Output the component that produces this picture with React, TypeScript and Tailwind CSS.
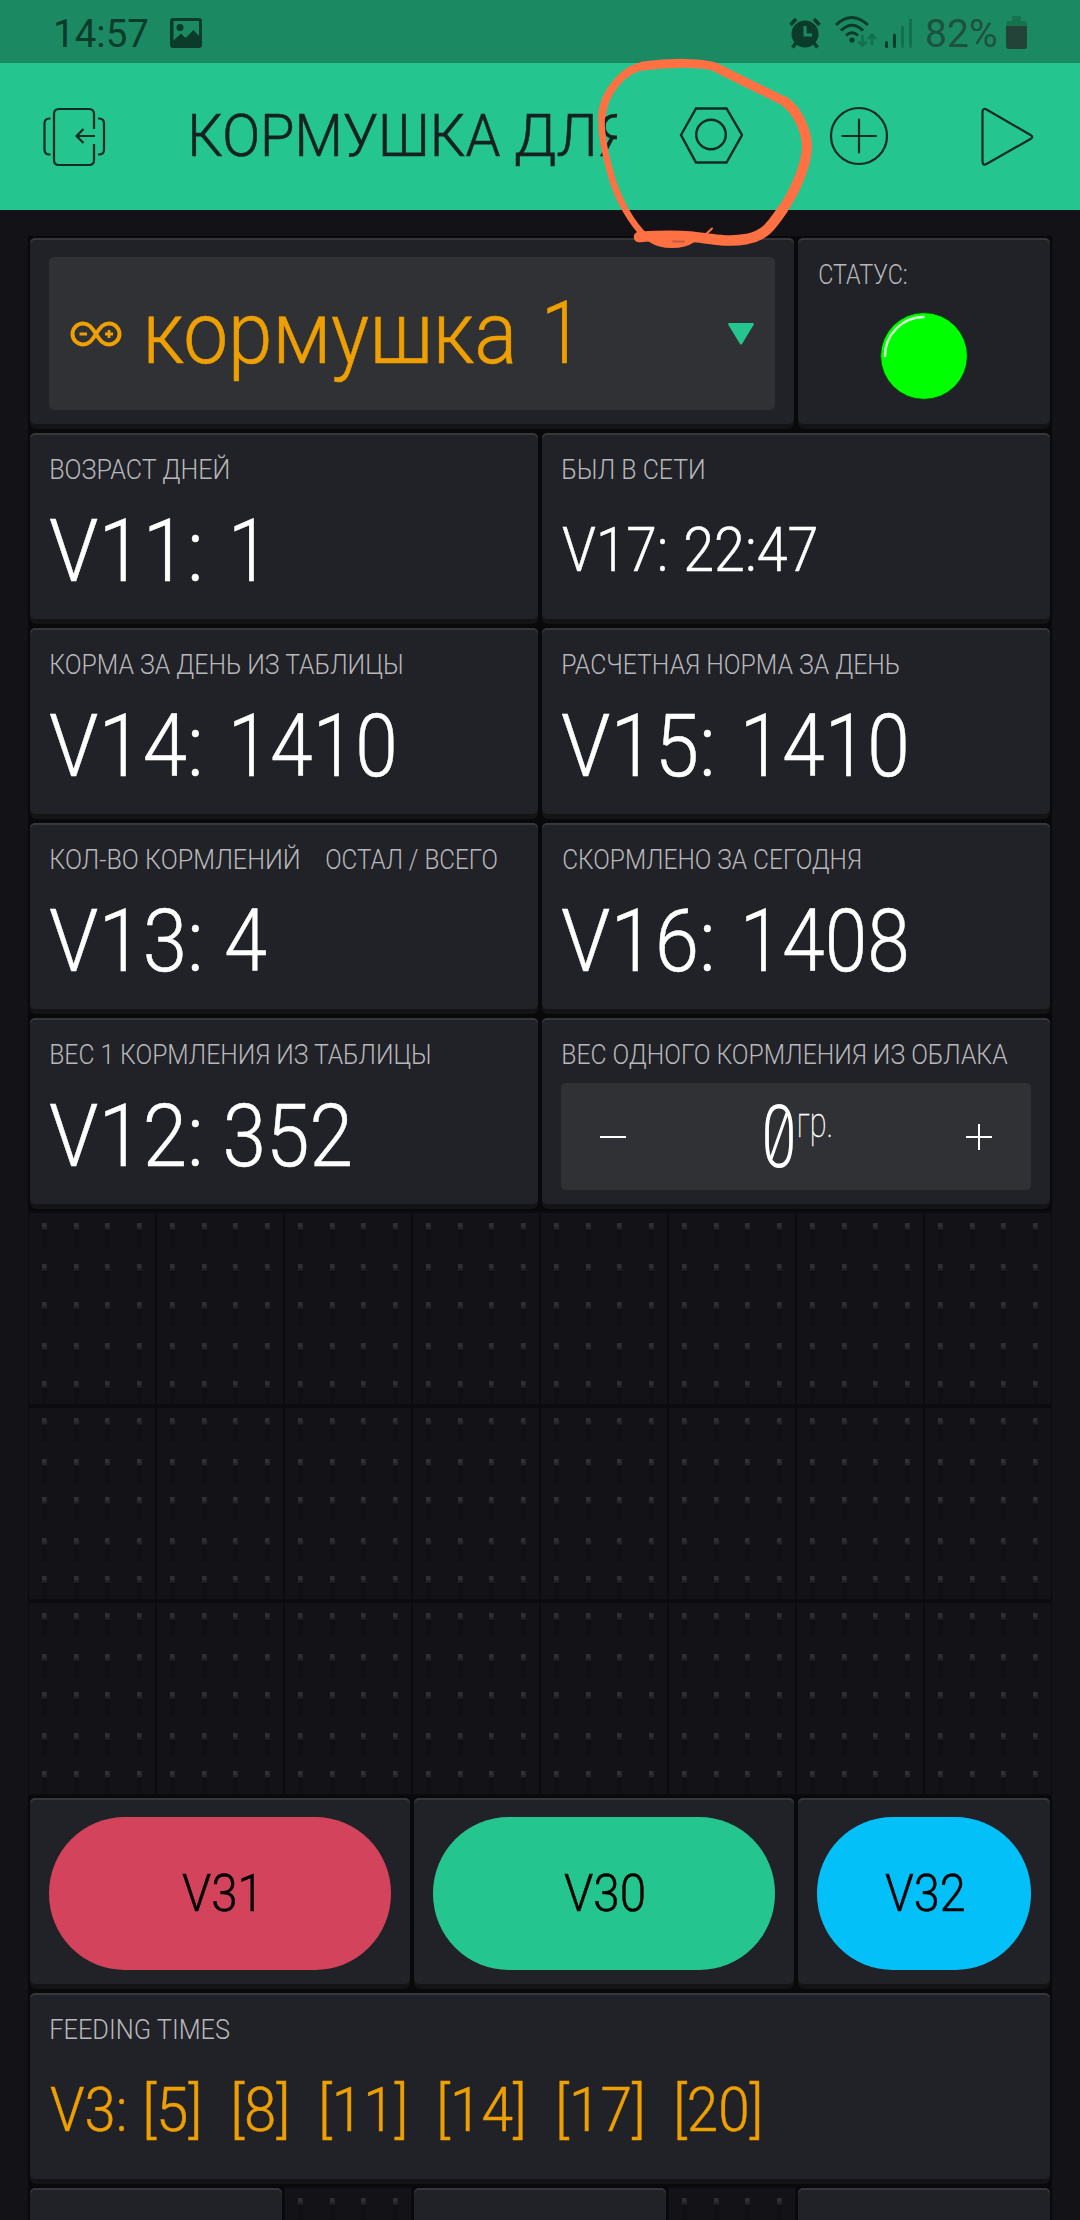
import { useLayoutEffect, useRef, type ReactNode } from "react";

/** One line of text whose inked width is fitted to `width` pixels. */
function Fit({ text, width, className = "" }: { text: string; width: number; className?: string }) {
  const box = useRef<HTMLSpanElement>(null);
  const ink = useRef<HTMLSpanElement>(null);
  useLayoutEffect(() => {
    const el = ink.current;
    if (!el || !box.current) return;
    const cs = getComputedStyle(el);
    const ctx = document.createElement("canvas").getContext("2d");
    if (!ctx) return;
    ctx.font = `${cs.fontWeight} ${cs.fontSize} ${cs.fontFamily}`;
    const m = ctx.measureText(text);
    const scale = width / (m.actualBoundingBoxLeft + m.actualBoundingBoxRight);
    box.current.style.width = `${width}px`;
    el.style.transform = `translateX(${m.actualBoundingBoxLeft * scale}px) scaleX(${scale})`;
  }, [text, width]);
  return (
    <span ref={box} className={`block shrink-0 whitespace-pre ${className}`}>
      <span ref={ink} className="inline-block origin-left">
        {text}
      </span>
    </span>
  );
}

const LABEL = "text-[28px] leading-7 text-[#b8b8bc]";

function Card({ span, children, className = "" }: { span: string; children?: ReactNode; className?: string }) {
  return (
    <div className={`bg-[#09090b] px-0.5 pt-0.5 pb-0.5 ${span}`}>
      <div className="h-[191px] rounded-[6px] bg-[#141416] pb-[5px]">
        <div className={`h-[186px] rounded-[5px] bg-[#212227] shadow-[inset_0_2px_0_#37373b] ${className}`}>{children}</div>
      </div>
    </div>
  );
}

type Run = [string, number];

/** Labelled display; `gap` separates the pin name from its value. */
function ValueCard({ labels, pin, value, gap, small }: { labels: Run[]; pin: Run; value: Run; gap: string; small?: boolean }) {
  const size = small
    ? "text-[60.5px] leading-none [-webkit-text-stroke:0.5px]"
    : "text-[87px] leading-none [-webkit-text-stroke:0.5px]";
  return (
    <Card span="col-span-4" className="flex flex-col pt-[23px] pl-5">
      <div className="flex h-7 gap-[27px] pl-px">
        {labels.map(([t, w]) => (
          <Fit key={t} text={t} width={w} className={LABEL} />
        ))}
      </div>
      <div className={`flex flex-1 items-center text-white ${gap}`}>
        <Fit text={pin[0]} width={pin[1]} className={size} />
        <Fit text={value[0]} width={value[1]} className={size} />
      </div>
    </Card>
  );
}

const DOT_X = [14, 46, 77, 109];
const DOT_Y = [12, 53, 91, 132, 170];

function EmptyCell() {
  return (
    <div className="border-x border-y-2 border-[#0c0c10] bg-[#131217]">
      <svg width="126" height="191" viewBox="1 2 126 191">
        {DOT_Y.map((y) =>
          DOT_X.map((x) => (
            <g key={`${x}-${y}`}>
              <rect x={x} y={y + 6} width="5" height="18" fill="#101013" />
              <rect x={x} y={y} width="5" height="6.5" fill="#242427" />
              <rect x={x} y={y} width="4" height="4" fill="#303033" />
            </g>
          )),
        )}
      </svg>
    </div>
  );
}

function PillCard({ span, text, width, color, nudge = "" }: { span: string; text: string; width: number; color: string; nudge?: string }) {
  return (
    <Card span={span} className="px-[19px] pt-[19px]">
      <button className={`flex h-[153px] w-full items-center justify-center rounded-[76px] text-black ${color}`}>
        <Fit text={text} width={width} className={`text-[52px] leading-[152px] [-webkit-text-stroke:0.5px] ${nudge}`} />
      </button>
    </Card>
  );
}

function StatusBar() {
  return (
    <div className="flex h-[63px] bg-[#1b8a63] text-[#0b3b2a]">
      <Fit text="14:57" width={92} className="ml-14 pt-[13px] text-[39px] leading-[43px] font-normal" />
      <svg className="mt-[18px] ml-[22px]" width="32" height="30" viewBox="0 0 32 30">
        <path fillRule="evenodd" fill="currentColor" d="M3 0h26q3 0 3 3v24q0 3-3 3H3q-3 0-3-3V3q0-3 3-3ZM3.500 3v19.500l7.500-7 4.500 4.500 8-8 5.500 6V3Z" />
        <circle cx="10" cy="9.500" r="3.500" fill="currentColor" />
      </svg>
      <svg className="mt-[17px] ml-auto" width="32" height="32" viewBox="0 0 32 32">
        <circle cx="16" cy="17" r="13.500" fill="currentColor" />
        <path d="M1.500 8 7 2M30.500 8 25 2M7 26l-3.500 4.500M25 26l3.500 4.500" stroke="currentColor" strokeWidth="3.500" />
        <path d="M16 9v9h7" fill="none" stroke="#1b8a63" strokeWidth="3" />
      </svg>
      <svg className="mt-[15px] ml-[13px]" width="44" height="34" viewBox="0 0 44 34" fill="none" stroke="currentColor">
        <path d="M2 10q15.500-15 32 0M7 15.500q11-10.500 22 0M12 20.500q6-5.500 12 0" strokeWidth="3" />
        <circle cx="18" cy="25" r="2.600" fill="currentColor" stroke="none" />
        <path d="M28.500 20v11M24.500 26.500l4 4 4-4M38 30V20M34 24l4-4 4 4" stroke="#13704f" strokeWidth="2.600" />
      </svg>
      <svg className="mt-[17px] ml-[6px]" width="30" height="32" viewBox="0 0 30 32" strokeWidth="3" strokeLinecap="round">
        <path d="M2.500 25.500v4M10.500 18v11.500" stroke="currentColor" />
        <path d="M18.500 10v19.500M26.500 3v26.500" stroke="#13704f" />
      </svg>
      <Fit text="82%" width={69} className="ml-[13px] pt-[13px] text-[39px] leading-[43px] font-normal text-[#1e5140]" />
      <svg className="mt-4 mr-[53px] ml-[10px]" width="21" height="33" viewBox="0 0 21 33">
        <path d="M6 0h9v5h3q3 0 3 3v3H0V8q0-3 3-3h3Z" fill="#157350" />
        <path d="M0 10h21v20q0 3-3 3H3q-3 0-3-3Z" fill="#234338" />
      </svg>
    </div>
  );
}

function Header() {
  return (
    <div className="flex h-[147px] items-start bg-[#25c58f] text-[#0f2b24]">
      <svg className="mt-11 ml-[42px]" width="64" height="60" viewBox="42 107 64 60" fill="none" stroke="currentColor" strokeWidth="2.200">
        <path d="M94 129v-15q0-5-5-5H59q-5 0-5 5v46q0 5 5 5h30q5 0 5-5v-16M95 136H76.500M83.500 129l-7 7 7 7" />
        <path d="M50.500 118.500h-1q-5 0-5 5v26q0 5 5 5h1M98 118.500h1q5 0 5 5v26q0 5-5 5h-1" />
      </svg>
      <div className="ml-[86px] flex h-[147px] w-[425px] gap-4 overflow-hidden text-[60px] leading-[145px] text-[#16221f] [-webkit-text-stroke:0.6px]">
        <Fit text="КОРМУШКА" width={308} />
        <Fit text="ДЛЯ" width={113} />
      </div>
      <svg className="mt-[43px] ml-[62px]" width="64" height="60" viewBox="679 106 64 60" fill="none" stroke="currentColor" strokeWidth="2.400">
        <path d="M681 135 696 108.500h30.500L742 135l-15.500 27.500H696Z" />
        <circle cx="711" cy="134.500" r="14.800" />
      </svg>
      <svg className="mt-[43px] ml-[86px]" width="60" height="60" viewBox="829 106 60 60" fill="none" stroke="currentColor" strokeWidth="2.200">
        <circle cx="859" cy="136" r="28" />
        <path d="M842.500 136h33.500M859 119.500v33" strokeLinecap="round" />
      </svg>
      <svg className="mt-[43px] ml-[91px]" width="56" height="62" viewBox="980 106 56 62" fill="none" stroke="currentColor" strokeWidth="2.200">
        <path d="M982.500 112v49q0 5 4 3l44-25q3.500-2 0-4l-44-25.500q-4-2-4 2.500Z" />
      </svg>
    </div>
  );
}

/** Freehand marker ring around the settings nut. */
function MarkerRing() {
  return (
    <svg className="pointer-events-none absolute top-[50px] left-[590px]" width="235" height="210" viewBox="590 50 235 210" fill="none" stroke="#ff7043" strokeLinecap="round" strokeLinejoin="round">
      <path d="M646 237C632 224 618 200 611 175C604 150 600 130 602 115" strokeWidth="6.500" />
      <path d="M602 115C604 92 624 69 643 66" strokeWidth="8" />
      <path d="M643 66C665 63 706 61 719 69L747 83L784 101" strokeWidth="9" />
      <path d="M784 101C800 112 807 134 807 148C806 170 790 199 783 209" strokeWidth="10" />
      <path d="M783 209C770 228 765 235 747 239C726 243 708 238 690 236.500C670 235 655 236 639 237" strokeWidth="10.500" />
      <path d="M650 240C662 248 682 248 694 240L671 238Z" fill="#ff7043" strokeWidth="4" />
      <path d="M712 228.500 704 236" strokeWidth="2" />
      <path d="M673 241.500h11" stroke="#c75a38" strokeWidth="2" />
    </svg>
  );
}

const TIMES: Run[] = [
  ["[5]", 52],
  ["[8]", 52],
  ["[11]", 82],
  ["[14]", 82.500],
  ["[17]", 82.500],
  ["[20]", 82],
];

export default function App() {
  return (
    <div className="relative h-[2220px] w-[1080px] overflow-hidden bg-[#131217] font-['Roboto',sans-serif] font-light">
      <StatusBar />
      <Header />
      <div className="mx-7 mt-[26px] grid auto-rows-[195px] grid-cols-8">
        <Card span="col-span-6" className="px-[19px] pt-[19px]">
          <div className="flex h-[153px] items-center rounded-[5px] bg-[#303134] px-[21px] text-[#ee9f02]">
            <svg className="shrink-0" width="52" height="26" viewBox="0 0 52 26" fill="none" stroke="currentColor" strokeWidth="4">
              <path d="M26 13C21 5 18 2.500 13 2.500a10.500 10.500 0 0 0 0 21C18 23.500 21 21 26 13S34 2.500 39 2.500a10.500 10.500 0 0 1 0 21C34 23.500 31 21 26 13Z" />
              <path d="M9.500 13h7.500M35 13h8M39 9v8" strokeWidth="2.800" />
            </svg>
            <div className="ml-[26px] flex gap-[34px] text-[87px] leading-[151px] [-webkit-text-stroke:0.6px]">
              <Fit text="кормушка" width={365} />
              <Fit text="1" width={20} />
            </div>
            <svg className="ml-auto" width="26" height="22" viewBox="0 0 26 22">
              <path d="M1 0h24q1.500.500.500 2L14 21q-1 1-2 0L.500 2Q-.500.500 1 0Z" fill="#25c58f" />
            </svg>
          </div>
        </Card>
        <Card span="col-span-2" className="pt-[23px]">
          <Fit text="СТАТУС:" width={88} className={`ml-[21px] ${LABEL}`} />
          <svg className="mx-auto mt-[23px]" width="88" height="88" viewBox="0 0 88 88">
            <circle cx="44" cy="44" r="43.300" fill="#00ff00" stroke="#0c4a12" strokeWidth="0.800" />
            <path d="M5 45A39 39 0 0 1 44.500 5" fill="none" stroke="#d9ffd9" strokeWidth="2.400" />
          </svg>
        </Card>

        <ValueCard labels={[["ВОЗРАСТ ДНЕЙ", 178]]} pin={["V11:", 149]} value={["1", 20]} gap="gap-[35px]" />
        <ValueCard labels={[["БЫЛ В СЕТИ", 141]]} pin={["V17:", 103]} value={["22:47", 130]} gap="gap-[21px]" small />
        <ValueCard labels={[["КОРМА ЗА ДЕНЬ ИЗ ТАБЛИЦЫ", 351]]} pin={["V14:", 149]} value={["1410", 160]} gap="gap-[35px]" />
        <ValueCard labels={[["РАСЧЕТНАЯ НОРМА ЗА ДЕНЬ", 336]]} pin={["V15:", 149]} value={["1410", 160]} gap="gap-[35px]" />
        <ValueCard labels={[["КОЛ-ВО КОРМЛЕНИЙ", 248], ["ОСТАЛ / ВСЕГО", 171]]} pin={["V13:", 149]} value={["4", 40]} gap="gap-[27px]" />
        <ValueCard labels={[["СКОРМЛЕНО ЗА СЕГОДНЯ", 297]]} pin={["V16:", 149]} value={["1408", 160]} gap="gap-[35px]" />
        <ValueCard labels={[["ВЕС 1 КОРМЛЕНИЯ ИЗ ТАБЛИЦЫ", 379]]} pin={["V12:", 149]} value={["352", 124]} gap="gap-[27px]" />

        <Card span="col-span-4" className="px-[19px] pt-[23px]">
          <Fit text="ВЕС ОДНОГО КОРМЛЕНИЯ ИЗ ОБЛАКА" width={445} className={`ml-0.5 ${LABEL}`} />
          <div className="mt-[14px] flex h-[107px] items-center rounded-[5px] bg-[#303134] px-[38px] text-white">
            <svg width="28" height="28" viewBox="0 0 28 28" stroke="#fff" strokeWidth="2">
              <path d="M1 14h26" />
            </svg>
            <div className="relative ml-[138px]">
              <Fit text="0" width={28} className="text-[88px] leading-[105px]" />
              <svg className="absolute top-[22px] left-0" width="28" height="60" viewBox="0 0 28 60" stroke="#fff" strokeWidth="3">
                <path d="M6 53 22 7" />
              </svg>
            </div>
            <Fit text="гр." width={32} className="ml-[6px] pb-[28px] text-[42px] leading-[60px] font-thin [-webkit-text-stroke:0.4px]" />
            <svg className="ml-auto" width="28" height="28" viewBox="0 0 28 28" stroke="#fff" strokeWidth="2">
              <path d="M1 14h26M14 1v26" />
            </svg>
          </div>
        </Card>

        {Array.from({ length: 24 }, (_, i) => (
          <EmptyCell key={i} />
        ))}

        <PillCard span="col-span-3" text="V31" width={72} color="bg-[#d3435c]" nudge="mr-1" />
        <PillCard span="col-span-3" text="V30" width={79.5} color="bg-[#25c58f]" />
        <PillCard span="col-span-2" text="V32" width={79} color="bg-[#04c0f8]" />

        <Card span="col-span-8" className="flex flex-col pt-[23px] pl-5">
          <Fit text="FEEDING TIMES" width={179} className={`ml-px ${LABEL}`} />
          <div className="flex flex-1 items-center gap-9 text-[60.5px] leading-none text-[#ee9f02] [-webkit-text-stroke:0.5px]">
            <div className="flex gap-[22px]">
              <Fit text="V3:" width={74} />
              <Fit text={TIMES[0][0]} width={TIMES[0][1]} />
            </div>
            {TIMES.slice(1).map(([t, w]) => (
              <Fit key={t} text={t} width={w} />
            ))}
          </div>
        </Card>

        <Card span="col-span-2" />
        <EmptyCell />
        <Card span="col-span-2" />
        <EmptyCell />
        <Card span="col-span-2" />
      </div>
      <MarkerRing />
    </div>
  );
}
